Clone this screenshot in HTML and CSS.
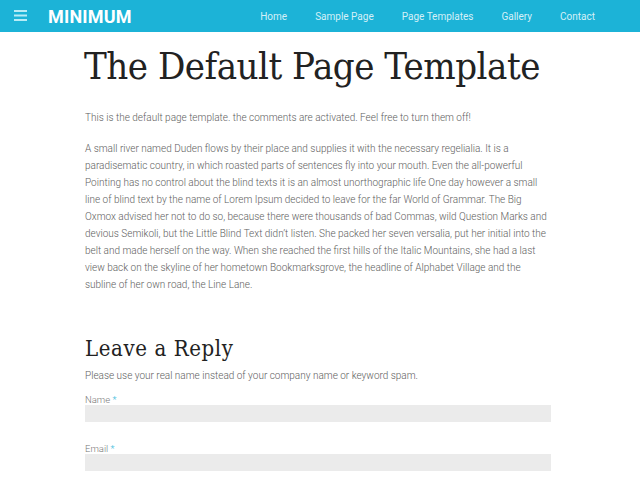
FILE: index.html
```html
<!DOCTYPE html>
<html>
<head>
	<meta charset="utf-8">
	<title>The Default Page Template - Minimum</title>
	<link rel="stylesheet" href="styles.css">
</head>
<body>

	<header class="site-header">
		<a class="menu-toggle" href="#">
			<svg width="13" height="11" viewBox="0 0 13 11">
				<rect x="0" y="0" width="13" height="2" fill="#b8ecf6"/>
				<rect x="0" y="4.5" width="13" height="2" fill="#b8ecf6"/>
				<rect x="0" y="9" width="13" height="2" fill="#b8ecf6"/>
			</svg>
		</a>
		<a class="logo" href="#">MINIMUM</a>
		<nav class="main-nav">
			<a href="#">Home</a>
			<a href="#">Sample Page</a>
			<a href="#">Page Templates</a>
			<a href="#">Gallery</a>
			<a href="#">Contact</a>
		</nav>
	</header>

	<main class="content">
		<h1 class="entry-title">The Default Page Template</h1>

		<p>This is the default page template. the comments are activated. Feel free to turn them off!</p>

		<p>A small river named Duden flows by their place and supplies it with the necessary regelialia. It is a paradisematic country, in which roasted parts of sentences fly into your mouth. Even the all-powerful Pointing has no control about the blind texts it is an almost unorthographic life One day however a small line of blind text by the name of Lorem Ipsum decided to leave for the far World of Grammar. The Big Oxmox advised her not to do so, because there were thousands of bad Commas, wild Question Marks and devious Semikoli, but the Little Blind Text didn’t listen. She packed her seven versalia, put her initial into the belt and made herself on the way. When she reached the first hills of the Italic Mountains, she had a last view back on the skyline of her hometown Bookmarksgrove, the headline of Alphabet Village and the subline of her own road, the Line Lane.</p>

		<section class="respond">
			<h3 class="reply-title">Leave a Reply</h3>
			<p class="notes">Please use your real name instead of your company name or keyword spam.</p>

			<div class="field">
				<label for="author">Name <span class="req">*</span></label>
				<input id="author" type="text">
			</div>

			<div class="field">
				<label for="email">Email <span class="req">*</span></label>
				<input id="email" type="text">
			</div>
		</section>
	</main>

</body>
</html>
```

FILE: styles.css
```css
body, html {
	margin: 0;
	padding: 0;
}

body {
	background: #fff;
	font-family: Roboto, "Open Sans", sans-serif;
	font-weight: 300;
	color: #666;
}

a {
	text-decoration: none;
}

.site-header {
	display: flex;
	align-items: center;
	height: 32px;
	background: #1cb3d7;
	padding: 0 14px;
}

.menu-toggle {
	display: flex;
	width: 13px;
	height: 11px;
	margin-top: -1px;
}

.logo {
	margin-left: 21px;
	color: #fff;
	font-family: Roboto, "Open Sans", sans-serif;
	font-weight: 700;
	font-size: 18px;
	letter-spacing: 0.2px;
}

.main-nav {
	display: flex;
	margin-left: auto;
	margin-right: 31px;
	gap: 28px;
}

.main-nav a {
	color: #d4f0f7;
	font-size: 10px;
	font-weight: 400;
}

.content {
	width: 466px;
	margin-left: 85px;
}

.entry-title {
	margin: 11px 0 20px -1px;
	font-family: "DejaVu Serif", serif;
	font-stretch: condensed;
	font-weight: 300;
	font-size: 38px;
	line-height: 46px;
	color: #222;
	letter-spacing: -0.5px;
	white-space: nowrap;
}

p {
	font-size: 10px;
	line-height: 17px;
	margin: 0 0 14px;
	color: #5e5e5e;
}

.respond {
	margin-top: 42px;
}

.reply-title {
	margin: 0 0 4px;
	font-family: "DejaVu Serif", serif;
	font-stretch: condensed;
	font-weight: 400;
	font-size: 22px;
	line-height: 28px;
	color: #222;
	letter-spacing: 0.6px;
}

.notes {
	margin-bottom: 10px;
}

.field {
	margin-bottom: 21px;
}

.field label {
	display: block;
	font-size: 9.5px;
	line-height: 11px;
	color: #777;
}

.req {
	color: #1cb3d7;
}

.field input {
	display: block;
	box-sizing: border-box;
	width: 100%;
	height: 17px;
	border: 0;
	background: #ebebeb;
	padding: 0 6px;
	margin: 0;
}
```
